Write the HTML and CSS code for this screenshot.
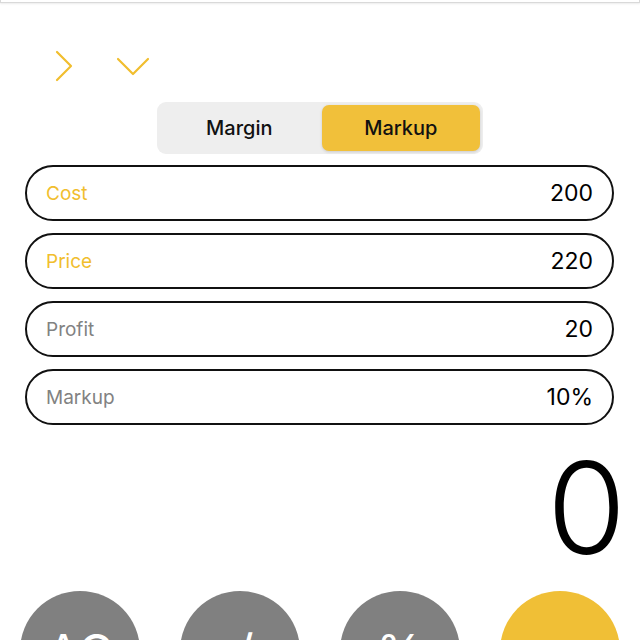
FILE: index.html
```html
<!DOCTYPE html>
<html>
<head>
<meta charset="utf-8">
<link rel="stylesheet" href="styles.css">
</head>
<body>
<div class="topbar"></div>
<div class="nav">
  <svg class="icon-right" width="20" height="32" viewBox="0 0 20 32"><path d="M3 2 L17 16 L3 30" fill="none" stroke="#f1be2e" stroke-width="2.2" stroke-linecap="round" stroke-linejoin="round"/></svg>
  <svg class="icon-down" width="34" height="20" viewBox="0 0 34 20"><path d="M2 3 L17 18 L32 3" fill="none" stroke="#f1be2e" stroke-width="2.2" stroke-linecap="round" stroke-linejoin="round"/></svg>
</div>
<div class="seg">
  <div class="seg-item">Margin</div>
  <div class="seg-item active">Markup</div>
</div>
<div class="fields">
  <div class="field"><span class="label accent">Cost</span><span class="value">200</span></div>
  <div class="field"><span class="label accent">Price</span><span class="value">220</span></div>
  <div class="field"><span class="label">Profit</span><span class="value">20</span></div>
  <div class="field"><span class="label">Markup</span><span class="value">10%</span></div>
</div>
<div class="display">0</div>
<div class="keys">
  <div class="key gray">AC</div>
  <div class="key gray">+/-</div>
  <div class="key gray">%</div>
  <div class="key yellow">÷</div>
</div>
</body>
</html>
```

FILE: styles.css
```css
html, body {
  margin: 0;
  padding: 0;
  background: #fff;
}
body {
  width: 640px;
  height: 640px;
  overflow: hidden;
  font-family: Inter, "Noto Sans", sans-serif;
  color: #000;
}
.topbar {
  height: 2px;
  border: 1px solid #d9d9d9;
  border-top: none;
  box-shadow: 0 1px 2px rgba(0,0,0,0.08);
}
.nav {
  display: flex;
  align-items: center;
  gap: 42px;
  height: 44px;
  margin-top: 41px;
  padding-left: 54px;
}
.nav svg { display: block; }
.seg {
  width: 326px;
  height: 52px;
  box-sizing: border-box;
  margin: 14px auto 0;
  padding: 3px;
  background: #eeeeee;
  border-radius: 9px;
  display: flex;
  gap: 3px;
}
.seg-item {
  flex: 1;
  display: flex;
  align-items: center;
  justify-content: center;
  font-size: 20px;
  font-weight: 500;
  color: #111;
  border-radius: 7px;
}
.seg-item.active {
  background: #f1c03a;
  box-shadow: 0 1px 3px rgba(0,0,0,0.15);
}
.fields {
  display: flex;
  flex-direction: column;
  gap: 12px;
  margin: 11px 26px 0 25px;
}
.field {
  height: 56px;
  box-sizing: border-box;
  border: 2px solid #111;
  border-radius: 28px;
  display: flex;
  align-items: center;
  justify-content: space-between;
  padding: 0 19px 0 19px;
}
.label {
  font-size: 19px;
  color: #828282;
}
.label.accent { color: #f1be2e; }
.value {
  font-size: 23px;
  color: #000;
}
.display {
  margin-top: 19px;
  height: 128px;
  font-size: 128px;
  line-height: 128px;
  font-weight: 300;
  text-align: right;
  padding-right: 14px;
}
.keys {
  display: grid;
  grid-template-columns: repeat(4, 120px);
  gap: 40px;
  padding: 0 20px;
  margin-top: 19px;
}
.key {
  width: 120px;
  height: 120px;
  border-radius: 50%;
  display: flex;
  align-items: center;
  justify-content: center;
  color: #fff;
  font-size: 48px;
}
.key.gray { background: #808080; }
.key.yellow { background: #f0bf36; }
```
